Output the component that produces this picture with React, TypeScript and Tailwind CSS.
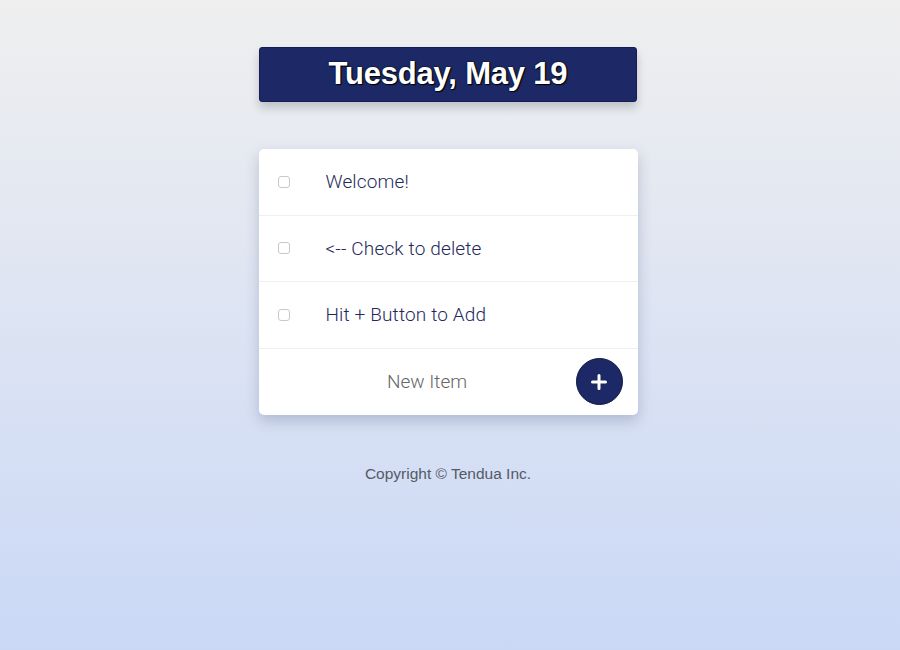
import React from "react";

const items = ["Welcome!", "<-- Check to delete", "Hit + Button to Add"];

export default function App() {
  return (
    <div
      className="min-h-[650px] w-full bg-gradient-to-b from-[#efefef] to-[#cad8f6] flex flex-col items-center pr-[4px]"
      style={{ fontFamily: '"Liberation Sans", Arial, sans-serif' }}
    >
      <div className="mt-[47px] w-[378px] h-[55px] bg-[#1c2966] border border-[#141d4f] rounded-[3px] shadow-[0_6px_10px_rgba(0,0,0,0.18)] flex items-center justify-center">
        <h1 className="text-white text-[31px] font-bold tracking-[-0.2px] [text-shadow:0_0_2px_#000,1px_1px_1px_#000]">
          Tuesday, May 19
        </h1>
      </div>

      <div className="mt-[47px] w-[379px] bg-white rounded-[5px] shadow-[0_6px_14px_rgba(60,70,110,0.25)]">
        {items.map((t) => (
          <div key={t} className="h-[66.5px] flex items-center border-b border-[#efefef]">
            <div className="ml-[19px] w-[12px] h-[12px] rounded-[3px] border border-[#c8c8c8] bg-white" />
            <span
              className="ml-[36px] pt-[1px] text-[19px] text-[#1f2a5c] font-light tracking-[0.15px]"
              style={{ fontFamily: 'Roboto, "Liberation Sans", sans-serif' }}
            >
              {t}
            </span>
          </div>
        ))}
        <div className="h-[66px] flex items-center">
          <div
            className="flex-1 text-center text-[19px] text-[#666666] pl-[20px] pt-[1px] font-light"
            style={{ fontFamily: 'Roboto, "Liberation Sans", sans-serif' }}
          >
            New Item
          </div>
          <button className="mr-[15px] w-[47px] h-[47px] rounded-full bg-[#1c2966] border border-[#0f1740] flex items-center justify-center">
            <svg width="18" height="18" viewBox="0 0 18 18">
              <path d="M9 2.5v13M2.5 9h13" stroke="white" strokeWidth="3" strokeLinecap="round" />
            </svg>
          </button>
        </div>
      </div>

      <p className="mt-[47px] text-[15.5px] text-[#555a66]">Copyright © Tendua Inc.</p>
    </div>
  );
}
